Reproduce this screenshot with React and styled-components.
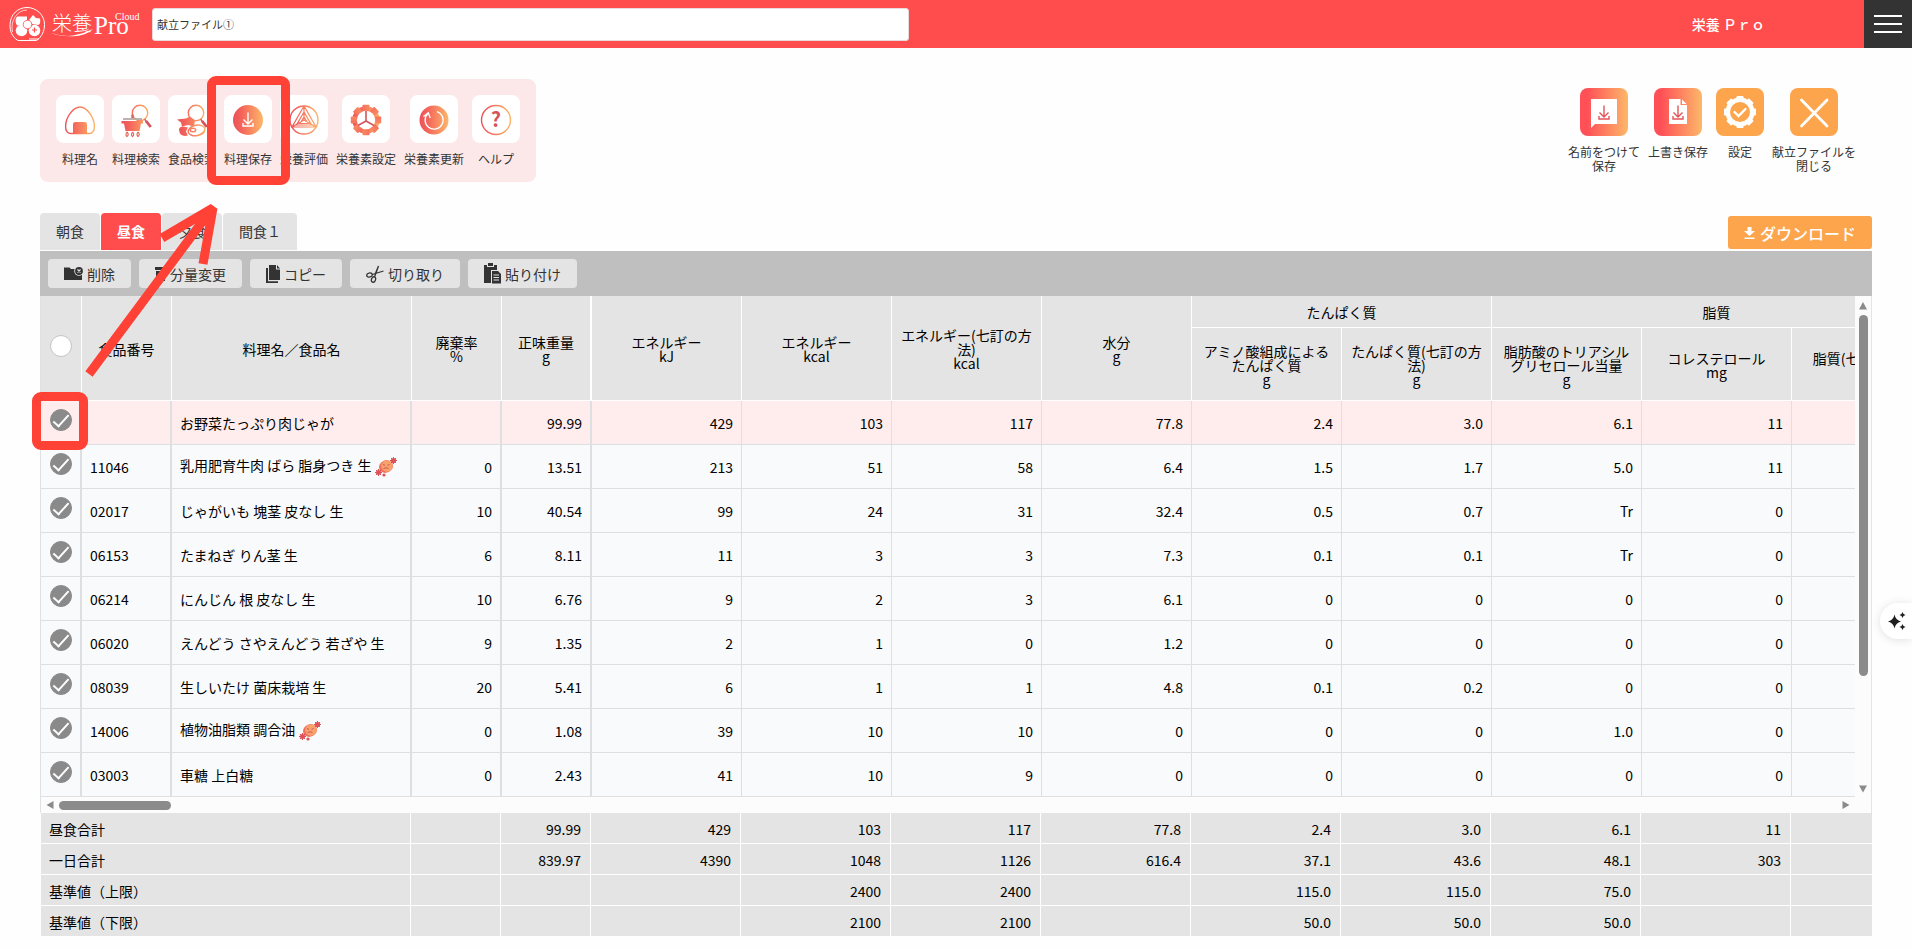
import React, { useState } from 'react'
import styled, { createGlobalStyle } from 'styled-components'

const GlobalStyle = createGlobalStyle`
    * {
        box-sizing: border-box;
    }
    body {
        margin: 0;
        background: #fefefe;
        color: #333;
        font-family: 'Noto Sans CJK JP', 'Noto Sans', sans-serif;
        font-size: 14px;
    }
    button, input {
        font-family: inherit;
        color: inherit;
        border: 0;
        margin: 0;
    }
    button {
        cursor: pointer;
    }
`

const Page = styled.div`
    position: relative;
    overflow: hidden;
    padding-bottom: 11px;
`

const Header = styled.header`
    display: flex;
    align-items: center;
    height: 48px;
    background: #ff4d4d;
    color: #fff;
`

const Logo = styled.a`
    display: flex;
    align-items: center;
    width: 152px;
    padding-left: 9px;
    flex-shrink: 0;
`

const FileName = styled.input`
    flex: 0 1 757px;
    min-width: 0;
    height: 33px;
    padding: 0 4px;
    background: #fff;
    border: 1px solid #e8dada;
    border-radius: 3px;
    color: #333;
    font-size: 11px;
`

const UserName = styled.span`
    margin-left: auto;
    margin-right: 99px;
    font-weight: 500;
    white-space: nowrap;
`

const MenuButton = styled.button`
    display: flex;
    flex-direction: column;
    align-items: center;
    justify-content: center;
    gap: 6px;
    width: 48px;
    height: 48px;
    padding: 0;
    background: #333;

    span {
        width: 28px;
        height: 2px;
        background: #fff;
    }
`

const Main = styled.main`
    padding: 31px 40px 0;
`

const ToolRow = styled.div`
    display: flex;
    justify-content: space-between;
    align-items: flex-start;
`

const Tools = styled.div`
    display: flex;
    gap: 8px;
    padding: 16px;
    background: #fce8e8;
    border-radius: 8px;
`

const FileActions = styled.div`
    display: flex;
    align-items: flex-start;
    gap: 8px;
    padding: 9px 16px 0 0;
`

const ToolButton = styled.button`
    display: flex;
    flex-direction: column;
    align-items: center;
    gap: 9px;
    min-width: 48px;
    padding: 0;
    background: none;
    font-size: 12px;
    line-height: 14px;
    white-space: pre;
`

const Tile = styled.span`
    display: block;
    width: 48px;
    height: 48px;
    border-radius: 8px;
    background: ${props => props.$bg || '#fff'};

    svg {
        display: block;
    }
`

const TabRow = styled.div`
    display: flex;
    justify-content: space-between;
    align-items: flex-end;
    margin-top: 31px;
`

const Tabs = styled.div`
    display: flex;
    gap: 1px;
    padding-bottom: 1px;
`

const Tab = styled.button`
    height: 37px;
    padding: 0 16px 2px;
    border-radius: 4px 4px 0 0;
    background: ${props => props.$active ? '#ff4d4d' : '#e4e4e4'};
    color: ${props => props.$active ? '#fff' : '#333'};
    font-size: 14px;
    font-weight: ${props => props.$active ? 700 : 400};
`

const Download = styled.button`
    display: flex;
    align-items: center;
    justify-content: center;
    gap: 5px;
    width: 144px;
    height: 33px;
    margin-bottom: 2px;
    padding: 0;
    border-radius: 3px;
    background: #fca54d;
    color: #fff;
    font-size: 16px;
    font-weight: 500;
`

const EditBar = styled.div`
    display: flex;
    gap: 8px;
    padding: 8px;
    background: #bfbfbf;
`

const EditButton = styled.button`
    display: flex;
    align-items: center;
    gap: 4px;
    height: 29px;
    padding: 0 16px;
    border-radius: 4px;
    background: #e4e4e4;
    font-size: 14px;
    line-height: 20px;
`

const Sheet = styled.div`
    display: grid;
    grid-template-columns: minmax(0, 1fr) 16px;
    border-left: 1px solid #dfe1e4;
    border-right: 1px solid #e4e4e4;
    background: #fcfcfc;
`

const Clip = styled.div`
    overflow: hidden;
`

const Table = styled.table`
    table-layout: fixed;
    width: ${props => props.$width}px;
    border-collapse: separate;
    border-spacing: 0;
    color: #000;
    font-size: 14px;
    line-height: 14px;
`

const Th = styled.th`
    height: ${props => props.$h}px;
    padding: 1px 8px 0;
    background: #e4e4e4;
    border-right: ${props => props.$thick ? 2 : 1}px solid #fff;
    border-bottom: 1px solid #fff;
    font-weight: 400;
`

const CheckHead = styled(Th)`
    padding: 0 0 4px;
`

const Row = styled.tr`
    background: ${props => props.$dish ? '#ffecec' : '#f9fafc'};
`

const Td = styled.td`
    height: 44px;
    padding: 0 8px;
    border-right: ${props => props.$frozen ? 2 : 1}px solid #dddfe2;
    border-bottom: 1px solid #dddfe2;
    text-align: ${props => props.$num ? 'right' : 'left'};
    white-space: nowrap;

    svg {
        vertical-align: middle;
        margin-left: 4px;
    }
`

const CheckCell = styled(Td)`
    padding: 0 0 5px;
    text-align: center;
`

const Check = styled.input`
    appearance: none;
    position: relative;
    display: block;
    width: 22px;
    height: 22px;
    margin: 0 auto;
    border: 1px solid #c4c4c4;
    border-radius: 50%;
    background: #fff;

    &:checked {
        border-color: #8a8a8a;
        background: #8a8a8a;
    }
    &:checked::after {
        content: '';
        box-sizing: border-box;
        position: absolute;
        top: 5px;
        left: 2px;
        width: 16px;
        height: 8px;
        border: solid #fff;
        border-width: 0 0 2px 2px;
        transform: rotate(-48deg);
    }
`

const ScrollBar = styled.div`
    display: flex;
    flex-direction: ${props => props.$vertical ? 'column' : 'row'};
    align-items: center;
    gap: 5px;
    padding: ${props => props.$vertical ? '6px 0 4px' : '0 5px'};
    height: ${props => props.$vertical ? 'auto' : '16px'};
`

const Thumb = styled.div`
    width: ${props => props.$vertical ? '9px' : '112px'};
    height: ${props => props.$vertical ? '361px' : '9px'};
    margin-bottom: ${props => props.$vertical ? 'auto' : 0};
    margin-right: ${props => props.$vertical ? 0 : 'auto'};
    border-radius: 5px;
    background: #8b8b8b;
`

const Totals = styled(Clip)`
    border-left: 1px solid #fff;
    background: #e4e4e4;

    th, td {
        height: 31px;
        padding: 2px 9px 0 8px;
        border-right: 1px solid #fff;
        border-bottom: 1px solid #fff;
        font-weight: 400;
        text-align: left;
    }
    td {
        text-align: right;
        padding: 2px 9px 0;
    }
`

const Assistant = styled.button`
    position: absolute;
    top: 603px;
    right: 0;
    width: 32px;
    height: 36px;
    padding: 0 0 0 7px;
    border-radius: 18px 0 0 18px;
    background: #fff;
    box-shadow: 0 1px 10px rgba(0, 0, 0, 0.12);

    svg {
        display: block;
    }
`

const Mark = styled.div`
    position: absolute;
    top: ${props => props.$top}px;
    left: ${props => props.$left}px;
    width: ${props => props.$w}px;
    height: ${props => props.$h}px;
    border: ${props => props.$line}px solid #ff4136;
    border-radius: 9px;
    pointer-events: none;
`

const Arrow = styled.svg`
    position: absolute;
    top: 200px;
    left: 80px;
    pointer-events: none;
`

const G = 'url(#warm)'

const Icon = ({ children }) => (
    <svg width="48" height="48" viewBox="0 0 48 48" fill="none" stroke={G} strokeWidth="1.4">{children}</svg>
)

const Gear = ({ cy, r, fill }) => (
    <g fill={fill} stroke="none">
        <circle cx="24" cy={cy} r={r - 1.5} />
        {[0, 45, 90, 135, 180, 225, 270, 315].map(a => (
            <rect key={a} x="20.5" y={cy - r} width="7" height="6" rx="0.8" transform={`rotate(${a} 24 ${cy})`} />
        ))}
    </g>
)

const Loupe = () => (
    <g stroke="#d5545a">
        <circle cx="28" cy="18" r="7.7" stroke={G} />
        <path d="M32.6 24.2l2 2.6" />
        <path d="M34 26l4.800 6" strokeWidth="2.800" />
    </g>
)

const Tray = ({ color }) => (
    <path stroke={color} d="M24 17.500v11M19.500 24.500l4.500 4.500 4.500-4.500M19 28v3h10v-3" />
)

// warm gradient runs left to right over the middle of a 48px tile
const tools = [
    ['料理名', (
        <Icon>
            <path d="M24 12c-7 0-14.400 10.500-14.400 19.500 0 5 2 7 5.500 7h17.800c3.500 0 5.500-2 5.500-7C38.400 22.500 31 12 24 12z" />
            <path fill={G} stroke="none" d="M17 38.500v-9c0-1.700 1-2.500 2.500-2.500h9c1.500 0 2.500.8 2.500 2.500v9z" />
        </Icon>
    )],
    ['料理検索', (
        <Icon>
            <Loupe />
            <path fill={G} stroke="none" d="M9.500 26H31v2.500h-2L27.500 36h-14L12 28.500H9.500z" />
            <path stroke="#b5aaa5" d="M11 24h19" strokeWidth="1.800" />
            <path stroke="#d06a5d" d="M20.500 19.500v3.500" strokeWidth="2.400" />
            <path stroke="#e0645c" strokeWidth="1.100" d="M15 37q2.500 2.500 0 4.500q-2-1.500 0-4.500M20.500 37q2.500 2.500 0 4.500q-2-1.500 0-4.500M26 37q2.500 2.500 0 4.500q-2-1.500 0-4.500" />
        </Icon>
    )],
    ['食品検索', (
        <Icon>
            <Loupe />
            <path fill={G} stroke="none" d="M9 24.500l9-1 4-2 5 4-1 6-6-1.500-6 1.500-1-4z" />
            <path fill={G} stroke="none" d="M11 35q0-3.500 4-3.500l5 1-2 4 2 4q-8 2-9-5.500z" />
            <ellipse cx="28.500" cy="35.500" rx="8.500" ry="5.200" fill="#fff" transform="rotate(-12 28 35)" />
            <ellipse cx="25" cy="35" rx="2.800" ry="1.800" />
            <path fill={G} stroke="none" d="M27 40.500q7-1 10-7q1 8-10 7z" />
        </Icon>
    )],
    ['料理保存', (
        <Icon>
            <circle cx="24" cy="25" r="15" fill={G} stroke="none" />
            <Tray color="#fff" />
        </Icon>
    )],
    ['栄養評価', (
        <Icon>
            <circle cx="24" cy="25" r="14" />
            <path d="M24 11L12 32h24zM24 17l-7.500 13h15zM24 22l-4 6.500h8zM24 11v14M12 32l12-7 12 7" strokeWidth="1.200" />
        </Icon>
    )],
    ['栄養素設定', (
        <Icon>
            <Gear cy={25} r={15.2} fill={G} />
            <circle cx="24" cy="25" r="9.200" fill="#fff" stroke="none" />
            <path stroke="#d5545a" d="M24 16v10l-8 4.500M24 26l8 4.500" strokeWidth="1.600" />
        </Icon>
    )],
    ['栄養素更新', (
        <Icon>
            <circle cx="24" cy="25" r="14.500" fill={G} stroke="none" />
            <path stroke="#fff" d="M27 16.600A9 9 0 1 1 18 18.500M13.500 21.500l4.800-3.600 2 5" strokeWidth="1.300" />
        </Icon>
    )],
    ['ヘルプ', (
        <Icon>
            <circle cx="24" cy="25" r="14.500" />
            <text x="24" y="32" textAnchor="middle" fontSize="20" fontWeight="700" fill="#d2555b" stroke="none">?</text>
        </Icon>
    )],
]

const warm = 'linear-gradient(90deg, #ff5057 15%, #fdb869)'

const fileActions = [
    ['名前をつけて\n保存', warm, (
        <Icon>
            <path fill="#fff" stroke="none" d="M11 11h26v25H15l-4 4z" />
            <Tray color="#e4545a" />
        </Icon>
    )],
    ['上書き保存', warm, (
        <Icon>
            <path fill="#fff" stroke="none" d="M15 11h11.500v6H33v19H15z" />
            <path fill="#fff" stroke="none" d="M28 11.500l4.500 4.500H28z" />
            <Tray color="#e4545a" />
        </Icon>
    )],
    ['設定', '#fca54d', (
        <Icon>
            <Gear cy={24} r={16} fill="#fff" />
            <circle cx="24" cy="24" r="10" fill="#fca54d" stroke="none" />
            <path stroke="#fff" strokeWidth="2.400" strokeLinecap="round" d="M18.500 24l4 4 7-7" />
        </Icon>
    )],
    ['献立ファイルを\n閉じる', '#fca54d', (
        <Icon>
            <path stroke="#fff" strokeWidth="2.800" strokeLinecap="round" d="M11.500 12l25.500 26M37 12L11.500 38" />
        </Icon>
    )],
]

const editButtons = [
    ['削除', (
        <svg width="19" height="16" viewBox="0 0 19 16">
            <path fill="#333" d="M0 1.500h5.500L7 3h11v11H0z" />
            <circle cx="15" cy="5" r="4.800" fill="#e4e4e4" />
            <circle cx="15" cy="5" r="3.900" fill="#333" />
            <path stroke="#e4e4e4" strokeWidth="1.200" d="M13.500 3.500l3 3M16.500 3.500l-3 3" />
        </svg>
    )],
    ['分量変更', (
        <svg width="11" height="18" viewBox="0 0 11 18" fill="#333">
            <path d="M0 2h11v3H0zM1 6h9v10H1z" />
        </svg>
    )],
    ['コピー', (
        <svg width="14" height="18" viewBox="0 0 14 18" fill="#333">
            <path d="M3 0h7v4.500h4V15H3zM11 0l3 3.500h-3zM0 3h2v13.200h10V18H0z" />
        </svg>
    )],
    ['切り取り', (
        <svg width="18" height="18" viewBox="0 0 18 18" fill="none" stroke="#333" strokeWidth="1.300">
            <ellipse cx="3.500" cy="10" rx="2.800" ry="2" transform="rotate(-15 3.500 10)" />
            <ellipse cx="7.500" cy="14.500" rx="2" ry="2.800" transform="rotate(20 7.500 14.500)" />
            <path d="M6.200 9.500L17.500 6M8.500 12L12.500 1M12.500 1L9 9.500" />
        </svg>
    )],
    ['貼り付け', (
        <svg width="17" height="22" viewBox="0 0 17 22">
            <path fill="#333" d="M0 2h3v2h7V2h3v5H7v13H0zM4 0h5v3H4zM8 8h6l3 3v9.500H8z" />
            <path stroke="#e4e4e4" strokeWidth="1.100" d="M9.500 12h5.500M9.500 14.500h5.500M9.500 17h5.500" />
        </svg>
    )],
]

const Germ = () => (
    <svg width="22" height="20" viewBox="0 0 22 20" role="img" aria-label="アレルギー">
        <ellipse cx="11" cy="9.500" rx="7.200" ry="6.200" fill="#f0705f" transform="rotate(-25 11 9.500)" />
        <ellipse cx="12" cy="9" rx="5.800" ry="5.800" fill="#f9a16b" />
        <circle cx="18.500" cy="3.500" r="2.600" fill="#dd5259" />
        <path stroke="#dd5259" d="M18.500 0v7M15 3.500h7M16 1l5 5M21 1l-5 5" />
        <circle cx="3.500" cy="15.500" r="2.500" fill="#dd5259" />
        <path stroke="#dd5259" d="M3.500 12v7M0 15.500h7M1 13l5 5M6 13l-5 5" />
        <circle cx="9" cy="18" r="1.600" fill="#dd5259" />
        <path stroke="#d2555b" fill="none" d="M8 7.500l2 .8M14.500 7.500l-2 .8M8.500 11.500q2.500-1.500 5 0" />
    </svg>
)

const tabNames = ['朝食', '昼食', '夕食', '間食１']

const columns = [41, 90, 240, 90, 90, 150, 150, 150, 150, 150, 150, 150, 150, 150]
const totalColumns = [370, ...columns.slice(3)]
const sum = list => list.reduce((a, b) => a + b, 0)

const rows = [
    ['', 'お野菜たっぷり肉じゃが', '', '99.99', '429', '103', '117', '77.8', '2.4', '3.0', '6.1', '11'],
    ['11046', '乳用肥育牛肉 ばら 脂身つき 生', '0', '13.51', '213', '51', '58', '6.4', '1.5', '1.7', '5.0', '11'],
    ['02017', 'じゃがいも 塊茎 皮なし 生', '10', '40.54', '99', '24', '31', '32.4', '0.5', '0.7', 'Tr', '0'],
    ['06153', 'たまねぎ りん茎 生', '6', '8.11', '11', '3', '3', '7.3', '0.1', '0.1', 'Tr', '0'],
    ['06214', 'にんじん 根 皮なし 生', '10', '6.76', '9', '2', '3', '6.1', '0', '0', '0', '0'],
    ['06020', 'えんどう さやえんどう 若ざや 生', '9', '1.35', '2', '1', '0', '1.2', '0', '0', '0', '0'],
    ['08039', '生しいたけ 菌床栽培 生', '20', '5.41', '6', '1', '1', '4.8', '0.1', '0.2', '0', '0'],
    ['14006', '植物油脂類 調合油', '0', '1.08', '39', '10', '10', '0', '0', '0', '1.0', '0'],
    ['03003', '車糖 上白糖', '0', '2.43', '41', '10', '9', '0', '0', '0', '0', '0'],
]
const allergens = ['11046', '14006']

const totals = [
    ['昼食合計', '', '99.99', '429', '103', '117', '77.8', '2.4', '3.0', '6.1', '11'],
    ['一日合計', '', '839.97', '4390', '1048', '1126', '616.4', '37.1', '43.6', '48.1', '303'],
    ['基準値（上限）', '', '', '', '2400', '2400', '', '115.0', '115.0', '75.0', ''],
    ['基準値（下限）', '', '', '', '2100', '2100', '', '50.0', '50.0', '50.0', ''],
]

const Cols = ({ list }) => (
    <colgroup>
        {list.map((w, i) => <col key={i} width={w} />)}
    </colgroup>
)

const Triangle = ({ d }) => (
    <svg width="8" height="8" viewBox="0 0 8 8" fill="#8b8b8b"><path d={d} /></svg>
)

function FoodTable() {
    const [checked, setChecked] = useState(rows.map(() => true))

    const toggle = (index) => {
        setChecked(checked.map((c, i) => i === index ? !c : c))
    }

    return (
        <Table $width={sum(columns)}>
            <Cols list={columns} />
            <thead>
                <tr>
                    <CheckHead rowSpan={2}><Check type="checkbox" aria-label="すべて選択" /></CheckHead>
                    <Th rowSpan={2}>食品番号</Th>
                    <Th rowSpan={2}>料理名／食品名</Th>
                    <Th rowSpan={2}>廃棄率<br />%</Th>
                    <Th rowSpan={2} $thick>正味重量<br />g</Th>
                    <Th rowSpan={2}>エネルギー<br />kJ</Th>
                    <Th rowSpan={2}>エネルギー<br />kcal</Th>
                    <Th rowSpan={2}>エネルギー(七訂の方法)<br />kcal</Th>
                    <Th rowSpan={2}>水分<br />g</Th>
                    <Th colSpan={2} $h={32}>たんぱく質</Th>
                    <Th colSpan={3} $h={32}>脂質</Th>
                </tr>
                <tr>
                    <Th $h={73}>アミノ酸組成によるたんぱく質<br />g</Th>
                    <Th>たんぱく質(七訂の方法)<br />g</Th>
                    <Th>脂肪酸のトリアシルグリセロール当量<br />g</Th>
                    <Th>コレステロール<br />mg</Th>
                    <Th>脂質(七訂の方法)<br />g</Th>
                </tr>
            </thead>
            <tbody>
                {rows.map(([code, name, ...values], i) => (
                    <Row key={name} $dish={!code}>
                        <CheckCell $frozen>
                            <Check type="checkbox" aria-label={name} checked={checked[i]} onChange={() => toggle(i)} />
                        </CheckCell>
                        <Td $frozen>{code}</Td>
                        <Td $frozen>{name}{allergens.includes(code) && <Germ />}</Td>
                        {values.map((v, j) => <Td key={j} $num $frozen={j < 2}>{v}</Td>)}
                        <Td />
                    </Row>
                ))}
            </tbody>
        </Table>
    )
}

function App() {
    const [tab, setTab] = useState('昼食')

    return (
        <Page>
            <GlobalStyle />
            <svg width="0" height="0" style={{ position: 'absolute' }} aria-hidden="true">
                <defs>
                    <linearGradient id="warm" gradientUnits="userSpaceOnUse" x1="9" y1="0" x2="39" y2="0">
                        <stop offset="0" stopColor="#e8525a" />
                        <stop offset="0.25" stopColor="#f4605a" />
                        <stop offset="1" stopColor="#fcb869" />
                    </linearGradient>
                </defs>
            </svg>
            <Header>
                <Logo href="#" aria-label="栄養Pro Cloud">
                    <svg width="134" height="44" viewBox="0 0 134 44" fill="#fff">
                        <path d="M9 38.500C3 35 .8 29 1 22.500 1.500 12 9 5.500 18 5.500s17.500 7 17.500 17c0 7-3 12.500-8 16z" fill="none" stroke="#fff" strokeWidth="1" />
                        <path d="M3.500 30C1 19 8 8 18 8" fill="none" stroke="#fff" strokeWidth=".7" />
                        <path d="M8 14.500h10v6l-3 3H8q-3-4.500 0-9zM24 13l3 3 4 .5q1 6-2 6.500l-6-1-3-4z" />
                        <circle cx="12.500" cy="28.500" r="5.800" />
                        <circle cx="25.500" cy="28.500" r="5.800" />
                        <circle cx="18.500" cy="22.500" r="4.300" stroke="#ff4d4d" strokeWidth=".8" />
                        <path d="M25.500 25.500v5M23 28h5" stroke="#ff4d4d" strokeWidth="1.200" />
                        <path d="M20 37h10" stroke="#fff" />
                        <text x="43" y="29" fontSize="20" fontWeight="300">栄養</text>
                        <path d="M42 31q12 4 22 2.500T84 27q-7 7-20 7.300T42 31z" />
                        <text x="85" y="32" fontSize="25" fontFamily="Liberation Serif, serif">Pro</text>
                        <text x="106" y="18" fontSize="10" fontFamily="Liberation Serif, serif">Cloud</text>
                    </svg>
                </Logo>
                <FileName aria-label="献立ファイル名" defaultValue="献立ファイル①" />
                <UserName>栄養 Ｐｒｏ</UserName>
                <MenuButton aria-label="メニュー"><span /><span /><span /></MenuButton>
            </Header>
            <Main>
                <ToolRow>
                    <Tools>
                        {tools.map(([label, icon]) => (
                            <ToolButton key={label}><Tile>{icon}</Tile>{label}</ToolButton>
                        ))}
                    </Tools>
                    <FileActions>
                        {fileActions.map(([label, bg, icon]) => (
                            <ToolButton key={label}><Tile $bg={bg}>{icon}</Tile>{label}</ToolButton>
                        ))}
                    </FileActions>
                </ToolRow>
                <TabRow>
                    <Tabs>
                        {tabNames.map(name => (
                            <Tab key={name} $active={name === tab} onClick={() => setTab(name)}>{name}</Tab>
                        ))}
                    </Tabs>
                    <Download>
                        <svg width="11" height="12" viewBox="0 0 11 12" fill="#fff">
                            <path d="M3.500 0h4v4H11L5.500 9 0 4h3.500zM.5 10.500h10V12H.5z" />
                        </svg>
                        ダウンロード
                    </Download>
                </TabRow>
                <EditBar>
                    {editButtons.map(([label, icon]) => (
                        <EditButton key={label}>{icon}{label}</EditButton>
                    ))}
                </EditBar>
                <Sheet>
                    <Clip><FoodTable /></Clip>
                    <ScrollBar $vertical>
                        <Triangle d="M4 0l4 7.500H0z" />
                        <Thumb $vertical />
                        <Triangle d="M0 .5h8L4 7.500z" />
                    </ScrollBar>
                    <ScrollBar>
                        <Triangle d="M7.500 0v8L.5 4z" />
                        <Thumb />
                        <Triangle d="M.5 0l7 4-7 4z" />
                    </ScrollBar>
                </Sheet>
                <Totals>
                    <Table $width={sum(totalColumns)}>
                        <Cols list={totalColumns} />
                        <tbody>
                            {totals.map(([label, ...values]) => (
                                <tr key={label}>
                                    <th scope="row">{label}</th>
                                    {values.map((v, i) => <td key={i}>{v}</td>)}
                                    <td />
                                </tr>
                            ))}
                        </tbody>
                    </Table>
                </Totals>
            </Main>
            <Assistant aria-label="アシスタント">
                <svg width="20" height="20" viewBox="0 0 20 20" fill="#1f1f1f">
                    <path d="M7.500 3.500Q8.500 9 14 10.500Q8.500 12 7.500 17.500Q6.500 12 1 10.500Q6.500 9 7.500 3.500zM15.500 1q.5 2.500 3 3-2.500.5-3 3-.5-2.500-3-3 2.500-.5 3-3zM15.500 13q.5 2.500 3 3-2.500.5-3 3-.5-2.500-3-3 2.500-.5 3-3z" />
                </svg>
            </Assistant>
            <Mark $top={76} $left={207} $w={83} $h={109} $line={9} />
            <Mark $top={392} $left={32} $w={56} $h={58} $line={9} />
            <Arrow width="150" height="180" viewBox="0 0 150 180" fill="none" stroke="#ff4136" strokeWidth="9">
                <path d="M9 174L131 10M82 38L133 8L123 64" strokeLinejoin="bevel" />
            </Arrow>
        </Page>
    )
}

export default App
